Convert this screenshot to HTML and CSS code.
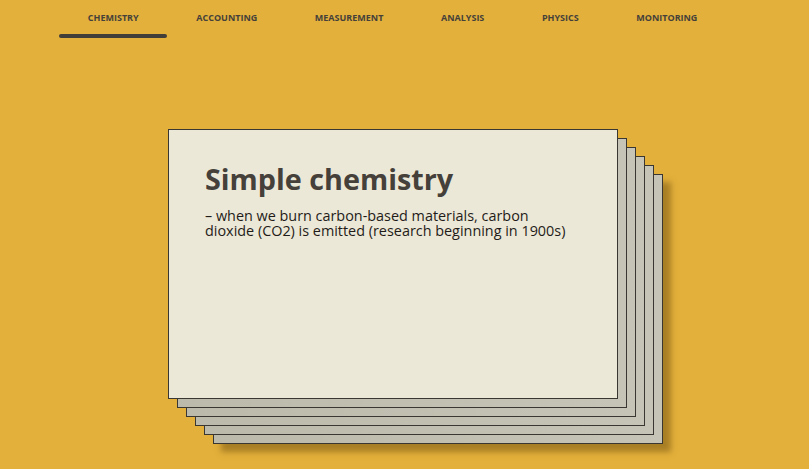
FILE: index.html
```html
<!DOCTYPE html>
<html>
<head>
<meta charset="utf-8">
<link rel="stylesheet" href="styles.css">
</head>
<body>
<nav class="tabs">
  <a class="tab active">Chemistry</a>
  <a class="tab">Accounting</a>
  <a class="tab">Measurement</a>
  <a class="tab">Analysis</a>
  <a class="tab">Physics</a>
  <a class="tab">Monitoring</a>
</nav>
<main class="stage">
  <div class="stack">
    <div class="sheet back b5"></div>
    <div class="sheet back b4"></div>
    <div class="sheet back b3"></div>
    <div class="sheet back b2"></div>
    <div class="sheet back b1"></div>
    <section class="sheet front">
      <h1 class="title">Simple chemistry</h1>
      <p class="text">– when we burn carbon-based materials, carbon dioxide (CO2) is emitted (research beginning in 1900s)</p>
    </section>
  </div>
</main>
</body>
</html>
```

FILE: styles.css
```css
html, body {
  margin: 0;
  padding: 0;
}
body {
  background: #e3b03b;
  font-family: "Open Sans", "Liberation Sans", sans-serif;
  color: #443f38;
  width: 809px;
  height: 469px;
  overflow: hidden;
}
.tabs {
  display: flex;
  padding-left: 59px;
}
.tab {
  position: relative;
  display: block;
  padding: 12px 28.8px 0;
  height: 23px;
  font-size: 9px;
  line-height: 12px;
  font-weight: 700;
  text-transform: uppercase;
  color: #45403a;
}
.tab.active::after {
  content: "";
  position: absolute;
  left: 0;
  right: 0;
  bottom: -3px;
  height: 4px;
  border-radius: 2px;
  background: #413d38;
}
.stage {
  padding: 94px 0 0 168px;
}
.stack {
  position: relative;
  width: 495px;
  height: 315px;
}
.sheet {
  box-sizing: border-box;
  width: 450px;
  height: 270px;
  border: 1px solid #3a3632;
}
.back {
  position: absolute;
  background: linear-gradient(90deg, #bcbaab, #c6c4b6);
}
.b1 { left: 9px; top: 9px; }
.b2 { left: 18px; top: 18px; }
.b3 { left: 27px; top: 27px; }
.b4 { left: 36px; top: 36px; }
.b5 { left: 45px; top: 45px; box-shadow: 8px 8px 6px rgba(120, 85, 20, 0.55); }
.front {
  position: relative;
  background: #ece8d7;
  padding: 30px 36px;
}
.title {
  margin: 0;
  font-size: 28.75px;
  line-height: 38px;
  font-weight: 700;
  color: #45403a;
}
.text {
  margin: 10px 0 0;
  font-size: 14.4px;
  line-height: 15px;
  color: #1f1c19;
  width: 370px;
}
```
